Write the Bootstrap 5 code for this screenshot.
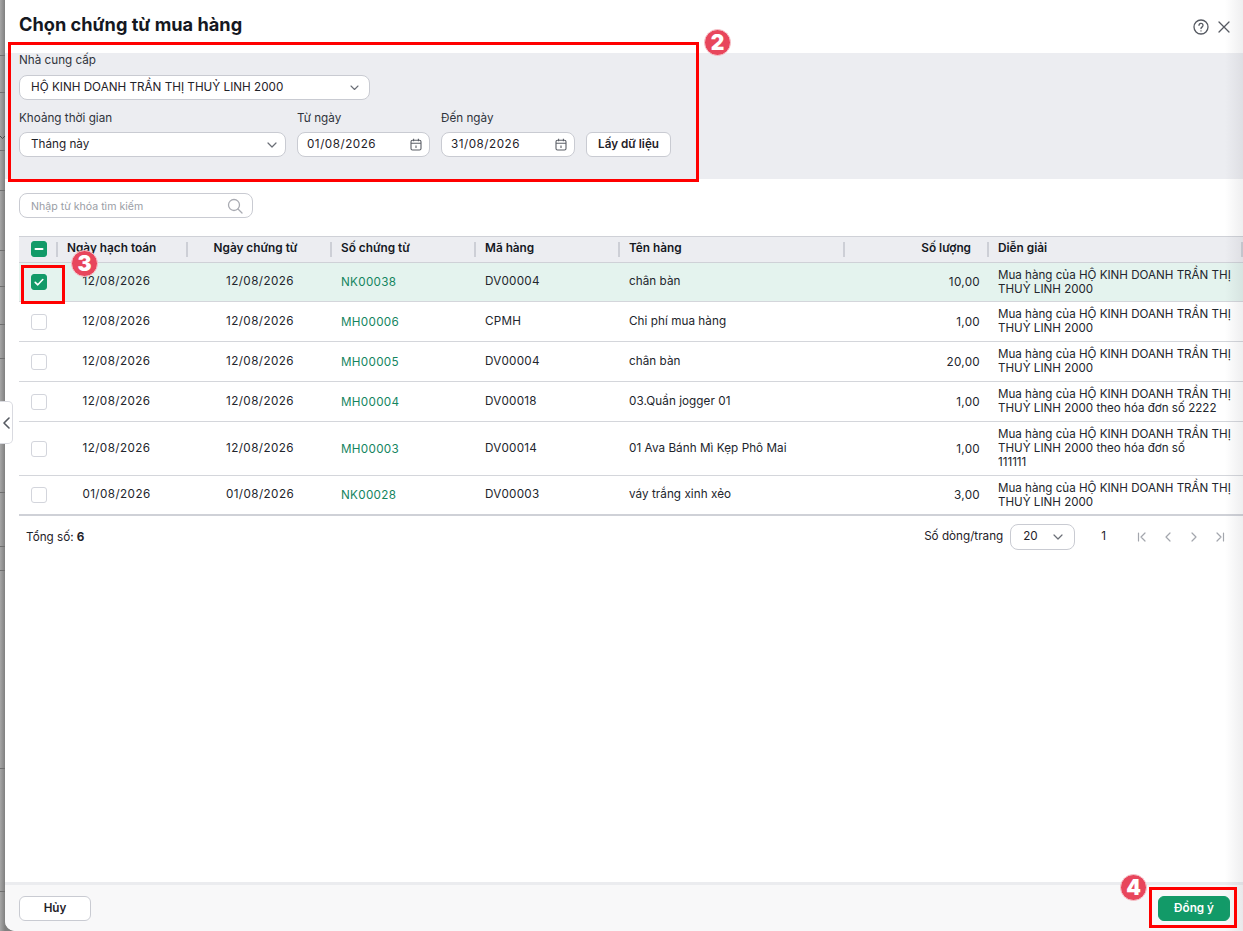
<!DOCTYPE html>
<html lang="vi">
<head>
  <meta charset="UTF-8">
  <title>Chọn chứng từ mua hàng</title>
  <link href="https://cdn.jsdelivr.net/npm/bootstrap@5.3.3/dist/css/bootstrap.min.css" rel="stylesheet">
  <script src="https://cdn.jsdelivr.net/npm/bootstrap@5.3.3/dist/js/bootstrap.bundle.min.js"></script>
  <style>
    html, body { height: 100%; margin: 0; overflow: hidden; }
    body { font-family: Inter, "Noto Sans", sans-serif; font-size: 11.7px; color: #1f2229; background: linear-gradient(to right, #a6a6a6, #808080 5px); }
    .man-hinh { position: relative; width: 1243px; height: 931px; padding-left: 5px; }
    .hop-thoai { height: 931px; background: #fff; border-radius: 0 0 0 10px; overflow: hidden; }
    .dau-hop { height: 53px; padding: 0 12px 4px 14px; }
    .dau-hop h1 { font-size: 18.2px; font-weight: 700; margin: 0; color: #15181f; }
    .nut-goc { padding-top: 4px; }
    .loc { height: 126px; background: #ecedf1; padding: 0 14px; }
    .nhan { height: 22px; line-height: 14px; color: #30343c; margin-bottom: 0; }
    .hang-2 .nhan { height: 21px; }
    .o-nhap { height: 25px; background: #fff; border: 1px solid #c9cbd2; border-radius: 8px; display: flex; align-items: center; justify-content: space-between; color: #1f2229; }
    .ncc { width: 351px; padding: 0 10px 0 11px; }
    .ky { width: 267px; padding: 0 8px 0 11px; }
    .ngay-1 { width: 133px; padding: 0 7px 0 9px; }
    .ngay-2 { width: 134px; padding: 0 7px 0 9px; }
    .so-ngay { letter-spacing: .5px; }
    .nut-lay { height: 25px; width: 85px; padding: 0; font-size: 11.7px; font-weight: 600; color: #1f2229; background: #fff; border: 1px solid #c9cbd2; border-radius: 6px; }
    .tim { width: 234px; padding: 0 9px 0 11px; color: #9a9da5; font-size: 10.6px; margin: 14px 0 18px 14px; }
    .tim span { padding-top: 2px; }
    .bang-wrap { margin-left: 14px; }
    .bang { table-layout: fixed; width: 1224px; margin: 0; border-collapse: separate; border-spacing: 0; }
    .bang th { height: 27px; font-size: 11.8px; background: #ecedf1; border-top: 1px solid #cfd1d7; border-bottom: 1px solid #cfd1d7; font-weight: 600; color: #15181f; padding: 0 10px 1px 9px; position: relative; white-space: nowrap; }
    .bang th::after { content: ""; position: absolute; right: 0; top: 5px; width: 2px; height: 15px; background: #cdcfd6; }
    .bang td { padding: 0 9px; border-bottom: 1px solid #d4d6db; color: #22252c; line-height: 14px; vertical-align: middle; background: transparent; }
    .bang tr.chon td { background: #e4f3ee; }
    .bang td.ngay { letter-spacing: .42px; text-align: center; padding-bottom: 2px; }
    .bang td.ngay1 { padding-right: 18px; padding-left: 5px; }
    .bang td.ma a { color: #14855f; text-decoration: none; letter-spacing: .3px; display: block; }
    .bang td.dd { font-size: 11.6px; padding-bottom: 1px; }
    .bang tr:last-child td { border-bottom: 2px solid #cfd1d7; }
    .o-chon { width: 16px; height: 16px; border-radius: 3px; border: 1px solid #d3d5dc; background: #fff; display: flex; align-items: center; justify-content: center; margin-left: 3px; }
    .o-chon.bat { background: #129a68; border-color: #129a68; }
    .chan-bang { padding: 8px 18px 0 21px; height: 50px; }
    .o-trang { width: 65px; padding: 0 11px 0 12px; height: 26px; }
    .day-hop { height: 49px; background: #f8f8f9; border-top: 3px solid #ebecef; padding: 0 13px 0 14px; }
    .nut-huy, .nut-dy { width: 72px; height: 25px; padding: 1px 0 0; font-size: 11.7px; font-weight: 600; border-radius: 6px; }
    .nut-huy { background: #fff; border: 1px solid #c9cbd2; color: #1f2229; }
    .nut-dy { background: #129a68; border: 1px solid #129a68; color: #fff; }
    .vien-do { position: absolute; border: 3px solid #f00; pointer-events: none; }
    .so-do { position: absolute; width: 27px; height: 27px; border-radius: 50%; background: #e8465c; border: 1px solid #f6c7cd; color: #fff; font-weight: 900; font-size: 21px; line-height: 25px; text-align: center; }
    .tay-cam { position: absolute; left: 0; top: 401px; width: 13px; height: 43px; background: #fff; border: 1px solid #d9dae0; border-left: 0; border-radius: 0 5px 5px 0; display: flex; align-items: center; justify-content: center; }
    .bong-phai { position: absolute; right: 0; top: 0; width: 18px; height: 931px; background: linear-gradient(to right, rgba(120,120,130,0), rgba(120,120,130,.12)); pointer-events: none; }
    .vach-nen { position: absolute; left: 0; width: 5px; height: 1px; background: #6f6f6f; }
    .dau-nen { position: absolute; left: 0; top: 135px; }
  </style>
</head>
<body>
  <div class="man-hinh">
    <div class="vach-nen" style="top:55px"></div>
    <div class="vach-nen" style="top:92px"></div>
    <div class="vach-nen" style="top:150px"></div>
    <div class="vach-nen" style="top:190px"></div>
    <div class="vach-nen" style="top:250px"></div>
    <div class="vach-nen" style="top:286px"></div>
    <div class="vach-nen" style="top:324px"></div>
    <div class="vach-nen" style="top:358px"></div>
    <div class="vach-nen" style="top:492px"></div>
    <div class="vach-nen" style="top:546px"></div>
    <div class="vach-nen" style="top:570px"></div>
    <div class="vach-nen" style="top:768px"></div>
    <div class="vach-nen" style="top:891px"></div>
    <svg class="dau-nen" width="5" height="5" viewBox="0 0 5 5" fill="none" stroke="#4a4a4a" stroke-width="1"><path d="M0 1l2.5 2.5L5 1"/></svg>

    <div class="hop-thoai d-flex flex-column">
      <div class="dau-hop d-flex align-items-center justify-content-between">
        <h1>Chọn chứng từ mua hàng</h1>
        <div class="nut-goc d-flex align-items-center gap-2">
          <svg width="16" height="16" viewBox="0 0 16 16" fill="none" stroke="#555961" stroke-width="1.3" stroke-linecap="round"><circle cx="8" cy="8" r="7"/><path d="M6 6.3a2 2 0 1 1 3.2 1.6c-.7.5-1.2.9-1.2 1.7"/><path d="M8 11.8v.1"/></svg>
          <svg width="14" height="14" viewBox="0 0 14 14" fill="none" stroke="#555961" stroke-width="1.3" stroke-linecap="round"><path d="M2 2l10 10M12 2L2 12"/></svg>
        </div>
      </div>

      <div class="loc">
        <div class="nhan">Nhà cung cấp</div>
        <div class="o-nhap ncc">
          <span>HỘ KINH DOANH TRẦN THỊ THUỶ LINH 2000</span>
          <svg width="9" height="6" viewBox="0 0 9 6" fill="none" stroke="#6a6e76" stroke-width="1.1" stroke-linecap="round" stroke-linejoin="round"><path d="M1 1l3.5 3.5L8 1"/></svg>
        </div>
        <div class="hang-2 d-flex align-items-end" style="gap:11px;padding-top:11px">
          <div>
            <div class="nhan">Khoảng thời gian</div>
            <div class="o-nhap ky">
              <span>Tháng này</span>
              <svg width="10" height="6" viewBox="0 0 10 6" fill="none" stroke="#6a6e76" stroke-width="1.2" stroke-linecap="round" stroke-linejoin="round"><path d="M1 1l4 4 4-4"/></svg>
            </div>
          </div>
          <div>
            <div class="nhan">Từ ngày</div>
            <div class="o-nhap ngay-1">
              <span class="so-ngay">01/08/2026</span>
              <svg width="12" height="13" viewBox="0 0 12 13" fill="none" stroke="#5b5f67" stroke-width="1.1"><rect x="1" y="2.2" width="10" height="9.8" rx="1.5"/><path d="M1 5.2h10M3.6 .8v2.4M8.4 .8v2.4M6 7.6v2.4"/></svg>
            </div>
          </div>
          <div>
            <div class="nhan">Đến ngày</div>
            <div class="o-nhap ngay-2">
              <span class="so-ngay">31/08/2026</span>
              <svg width="12" height="13" viewBox="0 0 12 13" fill="none" stroke="#5b5f67" stroke-width="1.1"><rect x="1" y="2.2" width="10" height="9.8" rx="1.5"/><path d="M1 5.2h10M3.6 .8v2.4M8.4 .8v2.4M6 7.6v2.4"/></svg>
            </div>
          </div>
          <button type="button" class="btn nut-lay">Lấy dữ liệu</button>
        </div>
      </div>

      <div class="o-nhap tim">
        <span>Nhập từ khóa tìm kiếm</span>
        <svg width="16" height="16" viewBox="0 0 16 16" fill="none" stroke="#a9abb2" stroke-width="1.3" stroke-linecap="round"><circle cx="7" cy="7" r="5.5"/><path d="M11 11l4 4"/></svg>
      </div>

      <div class="bang-wrap">
        <table class="bang">
          <colgroup>
            <col style="width:39px"><col style="width:130px"><col style="width:144px"><col style="width:144px"><col style="width:144px"><col style="width:225px"><col style="width:144px"><col style="width:254px">
          </colgroup>
          <thead>
            <tr>
              <th><div class="o-chon bat"><svg width="10" height="10" viewBox="0 0 10 10"><path d="M1.5 5h7" stroke="#fff" stroke-width="2" stroke-linecap="round"/></svg></div></th>
              <th>Ngày hạch toán</th>
              <th class="text-center" style="padding-right:18px">Ngày chứng từ</th>
              <th>Số chứng từ</th>
              <th>Mã hàng</th>
              <th>Tên hàng</th>
              <th class="text-end" style="padding-right:18px">Số lượng</th>
              <th>Diễn giải</th>
            </tr>
          </thead>
          <tbody id="than-bang"></tbody>
        </table>
      </div>

      <div class="chan-bang d-flex align-items-start justify-content-between">
        <div style="padding-top:5px">Tổng số: <b>6</b></div>
        <div class="d-flex align-items-center">
          <span style="margin-right:7px">Số dòng/trang</span>
          <div class="o-nhap o-trang">
            <span>20</span>
            <svg width="10" height="6" viewBox="0 0 10 6" fill="none" stroke="#6a6e76" stroke-width="1.2" stroke-linecap="round" stroke-linejoin="round"><path d="M1 1l4 4 4-4"/></svg>
          </div>
          <span style="margin:0 31px 0 26px">1</span>
          <div class="d-flex align-items-center" style="gap:16px">
            <svg width="10" height="10" viewBox="0 0 10 10" fill="none" stroke="#a3a6ad" stroke-width="1.2" stroke-linecap="round" stroke-linejoin="round"><path d="M1.5 1v8M8 1L4 5l4 4"/></svg>
            <svg width="10" height="10" viewBox="0 0 10 10" fill="none" stroke="#a3a6ad" stroke-width="1.2" stroke-linecap="round" stroke-linejoin="round"><path d="M7 1L3 5l4 4"/></svg>
            <svg width="10" height="10" viewBox="0 0 10 10" fill="none" stroke="#a3a6ad" stroke-width="1.2" stroke-linecap="round" stroke-linejoin="round"><path d="M3 1l4 4-4 4"/></svg>
            <svg width="10" height="10" viewBox="0 0 10 10" fill="none" stroke="#a3a6ad" stroke-width="1.2" stroke-linecap="round" stroke-linejoin="round"><path d="M8.5 1v8M2 1l4 4-4 4"/></svg>
          </div>
        </div>
      </div>

      <div class="flex-grow-1"></div>

      <div class="day-hop d-flex align-items-center justify-content-between">
        <button type="button" class="btn nut-huy">Hủy</button>
        <button type="button" class="btn nut-dy">Đồng ý</button>
      </div>
    </div>

    <div class="tay-cam">
      <svg width="7" height="12" viewBox="0 0 7 12" fill="none" stroke="#555961" stroke-width="1.6" stroke-linecap="round" stroke-linejoin="round"><path d="M6 1L1 6l5 5"/></svg>
    </div>
    <div class="bong-phai"></div>

    <!-- chu thich do tren anh -->
    <div class="vien-do" style="left:8px;top:42px;width:691px;height:140px"></div>
    <div class="vien-do" style="left:21px;top:265px;width:44px;height:39px"></div>
    <div class="vien-do" style="left:1149px;top:887px;width:88px;height:41px"></div>
    <div class="so-do" style="left:704px;top:29px">2</div>
    <div class="so-do" style="left:71px;top:250px">3</div>
    <div class="so-do" style="left:1120px;top:874px">4</div>
  </div>

  <script>
    var duLieu = [
      ["12/08/2026", "12/08/2026", "NK00038", "DV00004", "chân bàn", "10,00", "Mua hàng của HỘ KINH DOANH TRẦN THỊ THUỶ LINH 2000", 39],
      ["12/08/2026", "12/08/2026", "MH00006", "CPMH", "Chi phí mua hàng", "1,00", "Mua hàng của HỘ KINH DOANH TRẦN THỊ THUỶ LINH 2000", 40],
      ["12/08/2026", "12/08/2026", "MH00005", "DV00004", "chân bàn", "20,00", "Mua hàng của HỘ KINH DOANH TRẦN THỊ THUỶ LINH 2000", 40],
      ["12/08/2026", "12/08/2026", "MH00004", "DV00018", "03.Quần jogger 01", "1,00", "Mua hàng của HỘ KINH DOANH TRẦN THỊ THUỶ LINH 2000 theo hóa đơn số 2222", 40],
      ["12/08/2026", "12/08/2026", "MH00003", "DV00014", "01 Ava Bánh Mì Kẹp Phô Mai", "1,00", "Mua hàng của HỘ KINH DOANH TRẦN THỊ THUỶ LINH 2000 theo hóa đơn số<br>111111", 54],
      ["01/08/2026", "01/08/2026", "NK00028", "DV00003", "váy trắng xinh xẻo", "3,00", "Mua hàng của HỘ KINH DOANH TRẦN THỊ THUỶ LINH 2000", 40]
    ];
    var html = "";
    duLieu.forEach(function (d, i) {
      var chon = i === 0;
      html += '<tr class="' + (chon ? "chon" : "") + '" style="height:' + d[7] + 'px">'
        + '<td><div class="o-chon ' + (chon ? "bat" : "") + '">'
        + (chon ? '<svg width="12" height="12" viewBox="0 0 12 12" fill="none" stroke="#fff" stroke-width="1.6" stroke-linecap="round" stroke-linejoin="round"><path d="M2.2 6.3l2.6 2.5 5-5.3"/></svg>' : "")
        + '</div></td>'
        + '<td class="ngay ngay1">' + d[0] + '</td>'
        + '<td class="ngay">' + d[1] + '</td>'
        + '<td class="ma"><a href="#">' + d[2] + '</a></td>'
        + '<td class="ngay text-start" style="letter-spacing:.25px">' + d[3] + '</td>'
        + '<td class="ngay text-start" style="letter-spacing:.05px">' + d[4] + '</td>'
        + '<td class="text-end" style="letter-spacing:.3px">' + d[5] + '</td>'
        + '<td class="dd">' + d[6] + '</td>'
        + '</tr>';
    });
    document.getElementById("than-bang").innerHTML = html;
  </script>
</body>
</html>
